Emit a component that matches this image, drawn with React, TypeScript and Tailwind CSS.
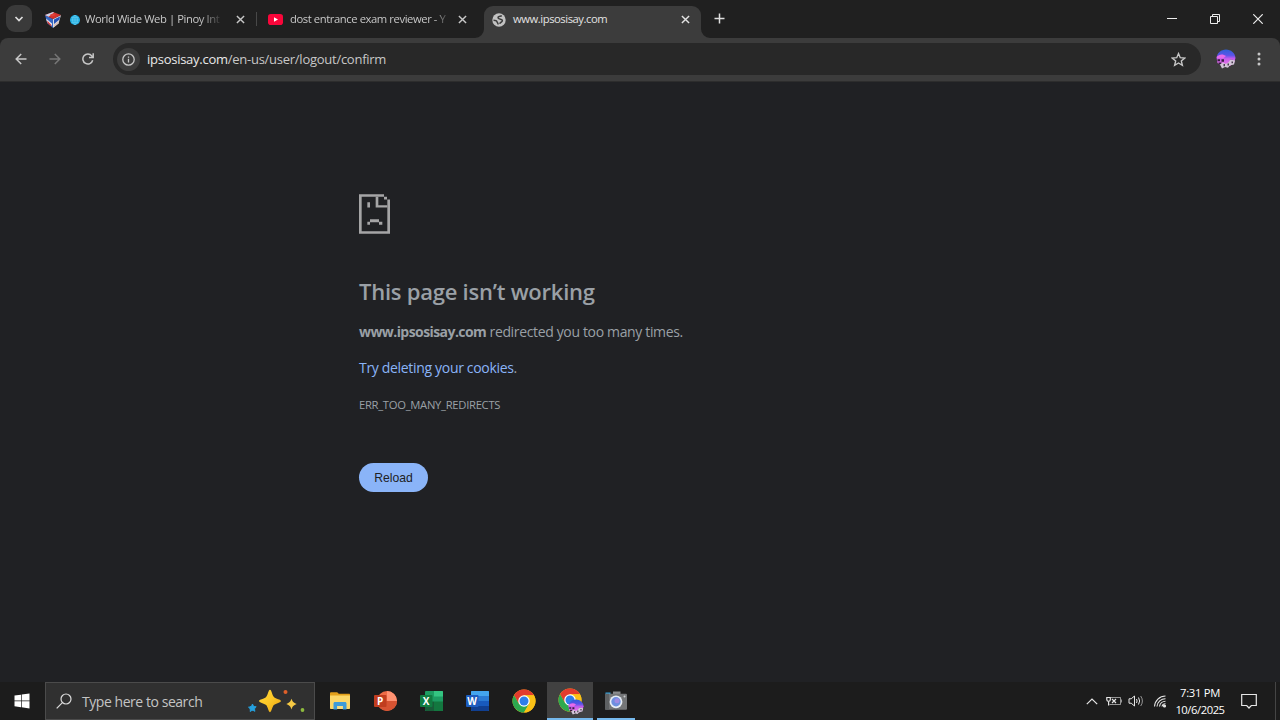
import type { ReactNode } from "react";
import clsx from "clsx";

type IconProps = { className?: string };

const CloseIcon = ({ className }: IconProps) => (
	<svg viewBox="0 0 10 10" className={className} fill="none" stroke="currentColor">
		<path d="M1 1l8 8M9 1l-8 8" strokeWidth="1.6" />
	</svg>
);

const GlobeIcon = () => (
	<svg viewBox="0 0 14 14" className="h-3.5 w-3.5 shrink-0">
		<circle cx="7" cy="7" r="6.700" fill="#c2c2c2" />
		<path
			d="M9.800 2.600C8.500 3.500 7 2.800 6.200 4c-.7 1.300.8 2 2.300 2.200 1.500.3 2.300 1 1.600 2.200-.6 1-2 .8-2.400 2.400M1.500 7.200c2 0 3 .2 3.400 1.400.3 1 1.200 1.200 1.200 3"
			fill="none"
			stroke="#3c3c3c"
			strokeWidth="1.500"
		/>
	</svg>
);

const PinoyIcon = () => (
	<svg viewBox="0 0 16 16" className="h-4 w-4 shrink-0">
		<path d="M0 3l8 4v9l-5.500-4.500z" fill="#3567c4" />
		<path d="M16 3L8 7v9l5.500-4.500z" fill="#d9dde3" />
		<path d="M0 3l8-3 8 3-8 4z" fill="#d6332f" />
		<path d="M0 3l8-3 1 .4L3.500 4.700z" fill="#c9d3ea" />
		<path d="M5 2.500l4-1 1.500 1.700L7 4.500z" fill="#e0423b" />
		<path d="M1 6.500l6 5v2.500L2 10z" fill="#e8ebf2" />
		<path d="M9 7.500l6-3-.5 3L9 12z" fill="#2450b5" />
		<path d="M2.200 8.500l4.200 4.500v1.500L2.600 11.300z" fill="#d83a34" />
		<path d="M9 13l4.500-4v2.500L9 15z" fill="#dcc0b8" />
	</svg>
);

const EmojiGlobe = () => (
	<svg viewBox="0 0 10 10" className="h-2.5 w-2.5 shrink-0" fill="none">
		<circle cx="5" cy="5" r="5" fill="#16a9e0" />
		<g stroke="#8adff8" strokeWidth=".5">
			<ellipse cx="5" cy="5" rx="2.300" ry="4.500" />
			<path d="M5 .5v9M.5 5h9M1.200 2.800h7.600M1.200 7.200h7.600" />
		</g>
	</svg>
);

const YouTubeIcon = () => (
	<svg viewBox="0 0 15 11" className="h-[11px] w-[15px]">
		<rect width="15" height="11" rx="2.800" fill="#f9063a" />
		<path d="M6 3.300l4 2.200-4 2.200z" fill="#fff" />
	</svg>
);

const Avatar = ({ className }: IconProps) => (
	<svg viewBox="0 0 20 20" className={className}>
		<defs>
			<linearGradient id="hair" x1="0" y1="0" x2="0" y2="1">
				<stop offset="0" stopColor="#2f5fd6" />
				<stop offset=".35" stopColor="#5a54e8" />
				<stop offset=".55" stopColor="#c45bec" />
				<stop offset="1" stopColor="#f07be6" />
			</linearGradient>
		</defs>
		<path d="M.6 9C1 4 5 .5 10 .5s9 3.500 9.500 8.500L18 14l-4 3H6l-4.500-3z" fill="url(#hair)" />
		<path d="M.6 8C3 5 7 4.500 10 7l-3 2.500-6-.3z" fill="#e66bea" />
		<path d="M1.500 10.200H4v2H1.500zM5.500 10.200H8v2.600H5.500zM2.500 13.500h3v2h-3zM14 10.800h2.500v2H14z" fill="#371c40" />
		<path d="M4 15.500l3-2 2.500 1.500 3-1.500 2-3 4.500 1-1 4-4 .8-2 2.500-3-.8-3 1.500z" fill="#d3c6d8" />
		<path d="M7.500 15H9v2.200H7.500zM11.500 14.500H13v2h-1.500zM15.500 12.500H17v1.800h-1.500z" fill="#4a3b50" />
	</svg>
);

const SadPage = () => (
	<svg viewBox="57 42 93 119" className="h-10 w-[31px]" fill="#a5a5a6">
		<path d="M57 42h75v8H65v103h77V58h8v103H57z" />
		<path d="M132 50h9v8h-9zM107 50h8v25h27v7h-35z" />
		<path d="M82 66h8v16h-8zM90 117h27v9H90zM82 125h8v9h-8zM117 125h10v9h-10z" />
	</svg>
);

const ChromeLogo = ({ className }: IconProps) => (
	<svg viewBox="0 0 48 48" className={className}>
		<circle cx="24" cy="24" r="23" fill="#fbc116" />
		<path d="M4.080 12.500A23 23 0 0 1 43.920 12.500H24L14.040 29.750z" fill="#e33b2e" />
		<path d="M4.080 12.500A23 23 0 0 0 24 47L33.960 29.750H14.040z" fill="#2da94f" />
		<path d="M24 12.500h19.920A23 23 0 0 1 24 47l9.960-17.250z" fill="#fbc116" />
		<circle cx="24" cy="24" r="11.500" fill="#fff" />
		<circle cx="24" cy="24" r="9" fill="#2f7de9" />
	</svg>
);

const FolderIcon = () => (
	<svg viewBox="0 0 22 20" className="h-5 w-[22px]">
		<path d="M1 2.500c0-.8.5-1.300 1.200-1.300h6l1.600 1.600H20c.6 0 1 .4 1 1v4H1z" fill="#e3a01b" />
		<path d="M1 4.500h20V17c0 .6-.4 1-1 1H2c-.6 0-1-.4-1-1z" fill="#fcd768" />
		<path d="M4.500 18.500v-6c0-.9.600-1.500 1.500-1.500h10c.9 0 1.500.6 1.500 1.500v6h-3.700V15H8.200v3.500z" fill="#3e9bd8" />
		<path d="M8.200 15h5.600v3H8.200z" fill="#f6dd83" />
	</svg>
);

const OfficeBadge = ({ letter, fill }: { letter: string; fill: string }) => (
	<>
		<rect x="0" y="5" width="12.500" height="12" rx="1" fill={fill} />
		<text
			x="6.200"
			y="14.500"
			textAnchor="middle"
			fill="#fff"
			fontSize="10"
			fontWeight="700"
			fontFamily="Open Sans, sans-serif"
		>
			{letter}
		</text>
	</>
);

const PowerPointIcon = () => (
	<svg viewBox="0 0 23 22" className="h-[22px] w-[23px]">
		<circle cx="13" cy="11" r="10" fill="#ee6c47" />
		<path d="M13 1a10 10 0 0 1 10 10H13z" fill="#ff9272" />
		<path d="M3 11h20a10 10 0 0 1-20 0z" fill="#d75332" />
		<OfficeBadge letter="P" fill="#c03d1f" />
	</svg>
);

const ExcelIcon = () => (
	<svg viewBox="0 0 23 22" className="h-[22px] w-[23px]">
		<rect x="5" y="1" width="18" height="20" rx="1" fill="#1d9c62" />
		<path d="M14 1h8a1 1 0 0 1 1 1v4.500h-9z" fill="#34c481" />
		<path d="M5 11.500h9V21H6a1 1 0 0 1-1-1z" fill="#185c38" />
		<path d="M14 11.500h9V20a1 1 0 0 1-1 1h-8z" fill="#13773f" />
		<OfficeBadge letter="X" fill="#107c41" />
	</svg>
);

const WordIcon = () => (
	<svg viewBox="0 0 23 22" className="h-[22px] w-[23px]">
		<rect x="5" y="1" width="18" height="20" rx="1" fill="#2a7bd4" />
		<path d="M6 1h16a1 1 0 0 1 1 1v4H5V2a1 1 0 0 1 1-1z" fill="#43a5ee" />
		<path d="M5 11h18v5H5z" fill="#185abd" />
		<path d="M5 16h18v4a1 1 0 0 1-1 1H6a1 1 0 0 1-1-1z" fill="#103f91" />
		<OfficeBadge letter="W" fill="#1d5cbe" />
	</svg>
);

const CameraIcon = () => (
	<svg viewBox="0 0 24 20" className="h-5 w-6">
		<path d="M1.500 1.500h5V4h-5z" fill="#2fa3df" />
		<path d="M9 .5h7.500V4H9z" fill="#8b8d8f" />
		<rect x="1" y="2.800" width="22" height="16" rx="1" fill="#747678" />
		<path d="M1 3.800a1 1 0 0 1 1-1h3v16H2a1 1 0 0 1-1-1z" fill="#5e6163" />
		<circle cx="12" cy="10.800" r="6.400" fill="#e6edf5" />
		<circle cx="12" cy="10.800" r="4.700" fill="#6d8fe0" />
		<circle cx="13" cy="9.800" r="2.500" fill="#a08be4" />
		<circle cx="20.500" cy="5.500" r="1" fill="#c9cacb" />
	</svg>
);

const Sparkles = () => (
	<svg viewBox="0 0 58 24" className="h-6 w-[58px]">
		<defs>
			<linearGradient id="gold" x1="0" y1="0" x2="1" y2="1">
				<stop offset="0" stopColor="#ffd83b" />
				<stop offset=".5" stopColor="#fcc726" />
				<stop offset="1" stopColor="#e8a013" />
			</linearGradient>
		</defs>
		<path
			d="M23 .8c1.600 0 2 5.200 3.900 7.100S34 10.400 34 12s-5.200 2.200-7.100 4.100-2.300 7.100-3.900 7.100-2-5.200-3.900-7.100S12 13.600 12 12s5.200-2.200 7.100-4.100S21.400.8 23 .8z"
			fill="url(#gold)"
		/>
		<path d="M44.500 9.800c1.200 3.200 2 4 5.200 5.200-3.200 1.200-4 2.200-5.200 5.400-1.200-3.200-2-4.200-5.200-5.400 3.200-1.200 4-2 5.200-5.200z" fill="#f6c944" />
		<path
			d="M5.500 15c.5 2 1.500 2.700 3.700 2.800-1.700 1.300-2 2.400-1.300 4.500-1.800-1.200-3-1.200-4.700.2.400-2.100.1-3.200-1.700-4.300 2.200-.2 3.200-1 4-3.200z"
			fill="#25a0dd"
			stroke="#25a0dd"
			strokeWidth="1"
		/>
		<circle cx="38.500" cy="3" r="2" fill="#e0602a" />
		<circle cx="55.500" cy="21" r="1.900" fill="#8dba3e" />
	</svg>
);

const Tab = ({
	icon,
	title,
	active,
	className,
}: {
	icon: ReactNode;
	title: ReactNode;
	active?: boolean;
	className: string;
}) => (
	<div
		className={clsx(
			"relative flex h-8 items-center pb-[5px] text-[11.25px] font-medium",
			active ? "rounded-t-[9px] bg-[#3c3c3c] text-[#e3e3e3]" : "text-[#c7c7c7]",
			className,
		)}
	>
		{active && (
			<>
				<svg viewBox="0 0 9 9" className="absolute bottom-0 -left-[9px] h-[9px] w-[9px]" fill="#3c3c3c">
					<path d="M9 0v9H0a9 9 0 0 0 9-9z" />
				</svg>
				<svg viewBox="0 0 9 9" className="absolute -right-[9px] bottom-0 h-[9px] w-[9px]" fill="#3c3c3c">
					<path d="M0 0v9h9a9 9 0 0 1-9-9z" />
				</svg>
			</>
		)}
		<span className="flex w-[15px] shrink-0 justify-center">{icon}</span>
		{title}
		<CloseIcon className="mb-px h-[9px] w-[9px] shrink-0" />
	</div>
);

const TabStrip = () => (
	<div className="flex h-[38px] items-end bg-[#202020] pl-1.5 text-[#dedede]">
		<button className="mb-1.5 flex h-[27px] w-[26px] items-center justify-center rounded-[9px] bg-[#3a3a3a]">
			<svg viewBox="0 0 10 6" className="h-1.5 w-2.5" fill="none" stroke="currentColor" strokeWidth="1.700">
				<path d="M1.500 1L5 4.500 8.500 1" />
			</svg>
		</button>
		<Tab
			className="ml-[13px] w-[199px]"
			icon={<PinoyIcon />}
			title={
				<span className="mr-[11px] ml-2.5 flex w-[155px] items-center">
					<EmojiGlobe />
					<span className="ml-[5px] w-[140px] whitespace-nowrap tracking-[-0.42px] [mask-image:linear-gradient(to_right,#000_82%,transparent_99%)]">
						World Wide Web | Pinoy Int
					</span>
				</span>
			}
		/>
		<div className="mb-3 ml-3 h-[14px] w-px bg-[#484848]" />
		<Tab
			className="ml-[11px] w-[199px]"
			icon={<YouTubeIcon />}
			title={
				<span className="mr-[12px] ml-[7px] w-[156px] whitespace-nowrap tracking-[-0.42px] [mask-image:linear-gradient(to_right,#000_92%,transparent_103%)]">
					dost entrance exam reviewer - Y
				</span>
			}
		/>
		<Tab
			active
			className="ml-[17px] w-[217px] pl-[7px]"
			icon={<GlobeIcon />}
			title={<span className="ml-[7px] w-[168px] tracking-[-0.45px]">www.ipsosisay.com</span>}
		/>
		<svg viewBox="0 0 11 11" className="mb-3.5 ml-[13px] h-[11px] w-[11px]" stroke="currentColor" strokeWidth="1.500">
			<path d="M5.500 .5v10M.5 5.500h10" />
		</svg>
		<div className="mb-3.5 ml-auto flex items-center gap-[33px] pr-[17px] text-[#ededed]">
			<svg viewBox="0 0 10 10" className="h-2.5 w-2.5" stroke="currentColor">
				<path d="M0 4.500h10" />
			</svg>
			<svg viewBox="0 0 10 10" className="h-2.5 w-2.5" fill="none" stroke="currentColor">
				<path d="M.5 2.500h7v7h-7zM2.500 2.500v-2h7v7h-2" />
			</svg>
			<svg viewBox="0 0 10 10" className="h-2.5 w-2.5" stroke="currentColor" strokeWidth="1.200">
				<path d="M.3.3l9.400 9.400M9.700.3L.3 9.700" />
			</svg>
		</div>
	</div>
);

const Toolbar = () => (
	<div className="bg-[#202020]">
		<div className="flex h-[44px] items-center rounded-t-[8px] border-b border-[#2d2d2d] bg-[#3c3c3c] pt-px pb-0.5 text-[#c7c7c7]">
			<svg viewBox="0 0 12 12" className="ml-[15px] h-3 w-3" fill="none" stroke="currentColor" strokeWidth="1.500">
				<path d="M11.500 6H1.300M6.200 1L1.200 6l5 5" />
			</svg>
			<svg viewBox="0 0 12 12" className="ml-[22px] h-3 w-3 text-[#777]" fill="none" stroke="currentColor" strokeWidth="1.500">
				<path d="M.5 6h10.200M5.800 1l5 5-5 5" />
			</svg>
			<svg viewBox="0 0 12 12" className="ml-[21px] h-3 w-3" fill="none" stroke="currentColor" strokeWidth="1.500">
				<path d="M10.700 7.300A5 5 0 1 1 9.800 2.900L11 4.300M11.200.3v4.200H7" />
			</svg>
			<div className="ml-[19px] flex h-8 w-[1088px] items-center rounded-full bg-[#282828] pr-[15px] pl-1">
				<span className="flex h-[23px] w-[23px] items-center justify-center rounded-full bg-[#3c3c3c]">
					<svg viewBox="0 0 13 13" className="h-[13px] w-[13px]" fill="none" stroke="currentColor" strokeWidth="1.300">
						<circle cx="6.500" cy="6.500" r="5.700" />
						<path d="M6.500 5.800v3.700M6.500 3.400v1.300" />
					</svg>
				</span>
				<span className="ml-[7px] pt-0.5 text-[13px] tracking-[-0.26px] text-[#c7c7c7]">
					<span className="text-[#e8e8e8]">ipsosisay.com</span>/en-us/user/logout/confirm
				</span>
				<svg viewBox="0 0 24 24" className="ml-auto h-[15px] w-[15px]" fill="none" stroke="currentColor" strokeWidth="2.200">
					<path d="M12 2.500l2.800 6.600 7.200.6-5.500 4.700 1.700 7L12 17.600l-6.200 3.800 1.700-7L2 9.700l7.200-.6z" />
				</svg>
			</div>
			<Avatar className="ml-[15px] h-5 w-5" />
			<svg viewBox="0 0 4 14" className="ml-[21px] h-3.5 w-1" fill="currentColor">
				<circle cx="2" cy="2" r="1.500" />
				<circle cx="2" cy="7" r="1.500" />
				<circle cx="2" cy="12" r="1.500" />
			</svg>
		</div>
	</div>
);

const ErrorPage = () => (
	<main className="flex-1 bg-[#202124] pt-28 pl-[359px] text-sm leading-5 text-[#9aa0a6]">
		<SadPage />
		<h1 className="mt-[42px] text-[22px] leading-[30px] font-semibold tracking-[-0.24px]">
			This page isn’t working
		</h1>
		<p className="mt-4 tracking-[-0.35px]">
			<strong className="font-bold tracking-[-0.57px]">www.ipsosisay.com</strong> redirected you too many times.
		</p>
		<p className="mt-4 tracking-[-0.32px]">
			<a className="text-[#8ab4f8]">Try deleting your cookies</a>.
		</p>
		<p className="mt-[17px] text-[11.25px] tracking-[-0.3px]">ERR_TOO_MANY_REDIRECTS</p>
		<button className="mt-12 flex h-[29px] w-[69px] items-center justify-center rounded-full bg-[#8ab4f8] font-['Liberation_Sans',sans-serif] text-[12.2px] text-[#202124]">
			Reload
		</button>
	</main>
);

const TaskSlot = ({ children, className }: { children: ReactNode; className?: string }) => (
	<div className={clsx("relative flex h-full w-[46px] items-center justify-center", className)}>{children}</div>
);

const Tray = () => (
	<div className="ml-auto flex h-full items-center text-[#e6e6e6]">
		<svg viewBox="0 0 12 7" className="h-[7px] w-3" fill="none" stroke="currentColor" strokeWidth="1.200">
			<path d="M.8 6.200L6 1l5.200 5.200" />
		</svg>
		<svg viewBox="0 0 16 12" className="ml-2 h-3 w-4" fill="none" stroke="currentColor">
			<path d="M5 2.500h9.500v7H3.500M15.500 4.500v3" opacity=".6" />
			<path d="M.8 2.500h3.500v2.300c0 1-.8 1.500-1.700 1.500S.8 5.800.8 4.800zM2.600 6.300v4.200M6 4l4 4M10 4L6 8" strokeWidth="1.200" />
		</svg>
		<svg viewBox="0 0 16 14" className="ml-1.5 h-3.5 w-4" fill="none" stroke="currentColor">
			<path d="M1 4.800h2.200L6.500 2v10L3.200 9.200H1zM8.500 5q1.200 2 0 4M10.500 3.500q2.300 3.500 0 7" />
			<path d="M12.700 2q3.400 5 0 10" opacity=".6" />
		</svg>
		<svg viewBox="0 0 14 14" className="ml-[9px] h-3.5 w-3.5" fill="none" stroke="currentColor" strokeWidth="1.100">
			<path d="M1.500 12.500A11 11 0 0 1 12.500 2M4 12.500A8.500 8.500 0 0 1 12.500 4.700M6.500 12.500a6 6 0 0 1 6-5.200M9 12.500a3.500 3.500 0 0 1 3.500-2.800" />
			<circle cx="11.500" cy="12" r="1" fill="currentColor" />
		</svg>
		<div className="ml-[7px] w-[52px] text-center text-[11.25px] leading-[17px] whitespace-nowrap text-white">
			<div className="tracking-[-0.3px]">7:31 PM</div>
			<div className="tracking-[-0.45px]">10/6/2025</div>
		</div>
		<svg viewBox="0 0 16 16" className="ml-[15px] h-4 w-4" fill="none" stroke="currentColor" strokeWidth="1.200">
			<path d="M.7 1.500h14.600v11h-5L8 15l-2.300-2.500h-5z" />
		</svg>
		<div className="mr-1 ml-[18px] h-full w-px bg-[#454545]" />
	</div>
);

const Taskbar = () => (
	<footer className="flex h-[38px] items-center bg-[#1c1c1c]">
		<div className="flex w-[45px] justify-center pr-px">
			<svg viewBox="0 0 16 16" className="h-4 w-4" fill="#fff">
				<path d="M.5 2.600L7 1.700v5.900H.5zM7.700 1.600L15.500.5v7.100H7.700zM.5 8.300H7v5.900l-6.500-.9zM7.700 8.300h7.800v7.100l-7.800-1.100z" />
			</svg>
		</div>
		<div className="flex h-full w-[270px] items-center border border-[#4b4b4b] bg-[#303030]">
			<svg viewBox="0 0 16 16" className="ml-[10px] h-4 w-4" fill="none" stroke="#dcdcdc" strokeWidth="1.200">
				<circle cx="10" cy="6" r="5" />
				<path d="M6.400 9.600L.7 15.300" />
			</svg>
			<span className="ml-2.5 pt-0.5 text-sm tracking-[-0.45px] text-[#c4c4c4]">Type here to search</span>
			<span className="mr-[9px] ml-auto">
				<Sparkles />
			</span>
		</div>
		<TaskSlot className="ml-0.5">
			<FolderIcon />
		</TaskSlot>
		<TaskSlot className="pr-px">
			<PowerPointIcon />
		</TaskSlot>
		<TaskSlot className="pr-px">
			<ExcelIcon />
		</TaskSlot>
		<TaskSlot className="pr-px">
			<WordIcon />
		</TaskSlot>
		<TaskSlot className="pr-px">
			<ChromeLogo className="h-6 w-6" />
		</TaskSlot>
		<TaskSlot className="w-[45px] border-b-2 border-[#76b9ed] bg-[#414141]">
			<ChromeLogo className="h-6 w-6" />
			<Avatar className="absolute right-[9px] bottom-[3px] h-4 w-4" />
		</TaskSlot>
		<TaskSlot>
			<CameraIcon />
			<span className="absolute inset-x-1 bottom-0 h-0.5 bg-[#76b9ed]" />
		</TaskSlot>
		<Tray />
	</footer>
);

export default function App() {
	return (
		<div className="flex h-[720px] w-[1280px] flex-col overflow-hidden bg-[#202124] font-['Open_Sans','Noto_Sans',sans-serif]">
			<TabStrip />
			<Toolbar />
			<ErrorPage />
			<Taskbar />
		</div>
	);
}
